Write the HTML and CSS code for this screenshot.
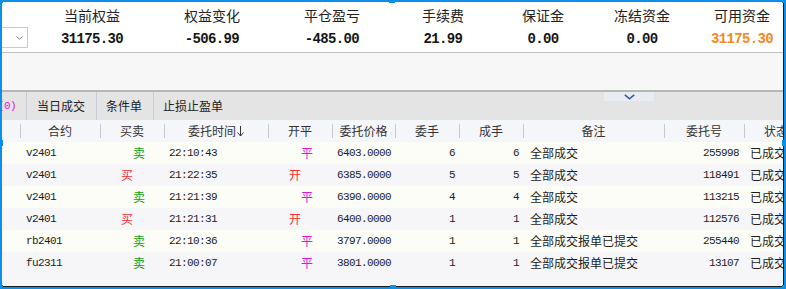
FILE: index.html
```html
<!DOCTYPE html>
<html lang="zh">
<head>
<meta charset="utf-8">
<link rel="stylesheet" href="styles.css">
</head>
<body>
<div class="frame">
  <div class="inner">
    <div class="stats">
      <div class="dd"><svg width="7" height="4" viewBox="0 0 7 4"><polyline points="0.5,0.5 3.5,3.2 6.5,0.5" fill="none" stroke="#7a7a7a" stroke-width="1"/></svg></div>
      <div class="stat s1"><div class="lbl">当前权益</div><div class="val">31175.30</div></div>
      <div class="stat s2"><div class="lbl">权益变化</div><div class="val">-506.99</div></div>
      <div class="stat s3"><div class="lbl">平仓盈亏</div><div class="val">-485.00</div></div>
      <div class="stat s4"><div class="lbl">手续费</div><div class="val">21.99</div></div>
      <div class="stat s5"><div class="lbl">保证金</div><div class="val">0.00</div></div>
      <div class="stat s6"><div class="lbl">冻结资金</div><div class="val">0.00</div></div>
      <div class="stat s7"><div class="lbl">可用资金</div><div class="val orange">31175.30</div></div>
    </div>
    <div class="blank"></div>
    <div class="tabs">
      <div class="tab t1">(0)</div>
      <div class="tab t2">当日成交</div>
      <div class="tab t3">条件单</div>
      <div class="tab t4">止损止盈单</div>
      <div class="toggle"><svg width="11" height="6" viewBox="0 0 11 6"><polyline points="0.8,0.8 5.5,4.8 10.2,0.8" fill="none" stroke="#3657a8" stroke-width="1.6"/></svg></div>
    </div>
    <div class="thead">
      <div></div>
      <div class="th">合约</div>
      <div class="th">买卖</div>
      <div class="th">委托时间<svg class="arrow" width="7" height="11" viewBox="0 0 7 11"><line x1="3.5" y1="0" x2="3.5" y2="10" stroke="#333" stroke-width="1"/><polyline points="0.5,6.5 3.5,10 6.5,6.5" fill="none" stroke="#333" stroke-width="1"/></svg></div>
      <div class="th">开平</div>
      <div class="th">委托价格</div>
      <div class="th">委手</div>
      <div class="th">成手</div>
      <div class="th">备注</div>
      <div class="th">委托号</div>
      <div class="th">状态</div>
    </div>
    <div class="tbody">
      <div class="tr">
        <div></div><div class="td m sym">v2401</div><div class="td bs"><span class="sell">卖</span></div><div class="td m time">22:10:43</div><div class="td oc"><span class="close">平</span></div><div class="td m r">6403.0000</div><div class="td m r">6</div><div class="td m r">6</div><div class="td note">全部成交</div><div class="td m id">255998</div><div class="td st">已成交</div>
      </div>
      <div class="tr">
        <div></div><div class="td m sym">v2401</div><div class="td bs"><span class="buy">买</span></div><div class="td m time">21:22:35</div><div class="td oc"><span class="open">开</span></div><div class="td m r">6385.0000</div><div class="td m r">5</div><div class="td m r">5</div><div class="td note">全部成交</div><div class="td m id">118491</div><div class="td st">已成交</div>
      </div>
      <div class="tr">
        <div></div><div class="td m sym">v2401</div><div class="td bs"><span class="sell">卖</span></div><div class="td m time">21:21:39</div><div class="td oc"><span class="close">平</span></div><div class="td m r">6390.0000</div><div class="td m r">4</div><div class="td m r">4</div><div class="td note">全部成交</div><div class="td m id">113215</div><div class="td st">已成交</div>
      </div>
      <div class="tr">
        <div></div><div class="td m sym">v2401</div><div class="td bs"><span class="buy">买</span></div><div class="td m time">21:21:31</div><div class="td oc"><span class="open">开</span></div><div class="td m r">6400.0000</div><div class="td m r">1</div><div class="td m r">1</div><div class="td note">全部成交</div><div class="td m id">112576</div><div class="td st">已成交</div>
      </div>
      <div class="tr">
        <div></div><div class="td m sym">rb2401</div><div class="td bs"><span class="sell">卖</span></div><div class="td m time">22:10:36</div><div class="td oc"><span class="close">平</span></div><div class="td m r">3797.0000</div><div class="td m r">1</div><div class="td m r">1</div><div class="td note">全部成交报单已提交</div><div class="td m id">255440</div><div class="td st">已成交</div>
      </div>
      <div class="tr">
        <div></div><div class="td m sym">fu2311</div><div class="td bs"><span class="sell">卖</span></div><div class="td m time">21:00:07</div><div class="td oc"><span class="close">平</span></div><div class="td m r">3801.0000</div><div class="td m r">1</div><div class="td m r">1</div><div class="td note">全部成交报单已提交</div><div class="td m id">13107</div><div class="td st">已成交</div>
      </div>
    </div>
  </div>
  <span class="h h-tl"></span>
  <span class="h h-tm"></span>
  <span class="h h-tr"></span>
  <span class="h h-ml"></span>
  <span class="h h-mr"></span>
  <span class="h h-bl"></span>
  <span class="h h-bm"></span>
  <span class="h h-br"></span>
</div>
</body>
</html>
```
FILE: styles.css
```css
html, body {
  margin: 0;
  padding: 0;
  overflow: hidden;
  background: #fff;
}
body {
  font-family: "Noto Sans CJK SC", "Noto Sans", sans-serif;
  color: #1c1c1c;
}
.frame {
  position: relative;
  width: 786px;
  height: 289px;
  box-sizing: border-box;
  border: 2px solid #0d8ee9;
}
.inner {
  height: 100%;
  box-sizing: border-box;
  border-right: 1px solid #1c1c1c;
  border-bottom: 1px solid #1c1c1c;
  overflow: hidden;
  background: #f6f6f9;
}

/* stats */
.stats {
  height: 50px;
  display: flex;
  background: #fff;
  border-bottom: 1px solid #c2c2c2;
}
.dd {
  flex: none;
  width: 21px;
  height: 19px;
  margin-top: 25px;
  padding-right: 4px;
  border: 1px solid #c9c9c9;
  border-left: none;
  display: flex;
  align-items: center;
  justify-content: flex-end;
  background: #fff;
}
.stat {
  flex: none;
  text-align: center;
  padding-top: 3px;
}
.s1 { width: 120px; margin-left: 4px; }
.s2 { width: 120px; }
.s3 { width: 120px; }
.s4 { width: 102px; }
.s5 { width: 98px; }
.s6 { width: 100px; }
.s7 { width: 100px; }
.lbl {
  font-size: 14px;
  line-height: 20px;
  color: #222;
}
.val {
  margin-top: 4px;
  font-family: "Liberation Mono", monospace;
  font-weight: bold;
  font-size: 14px;
  line-height: 20px;
  letter-spacing: -0.65px;
  color: #151515;
}
.val.orange { color: #f38a1f; }

.blank {
  height: 37px;
  background: #f7f7f7;
  border-bottom: 2px solid #b6b6b6;
}

/* tabs */
.tabs {
  position: relative;
  height: 28px;
  display: flex;
  background: #e4e4e5;
}
.tab {
  font-size: 12px;
  line-height: 28px;
  color: #222;
  white-space: nowrap;
  border-right: 1px solid #c9cdd7;
}
.t1 {
  margin-left: -4px;
  padding-right: 10px;
  font-family: "Liberation Mono", monospace;
  font-size: 11px;
  letter-spacing: -0.6px;
  color: #e014e0;
}
.t2 { padding: 0 11px 0 10px; }
.t3 { padding: 0 11px 0 9px; }
.t4 { padding: 0 0 0 9px; border-right: none; }
.toggle {
  position: absolute;
  left: 602px;
  top: 0;
  width: 50px;
  height: 9px;
  background: #e9ecf3;
  display: flex;
  align-items: center;
  justify-content: center;
}

/* table */
.thead, .tr {
  display: grid;
  grid-template-columns: 18px 80px 64px 104px 64px 63px 64px 64px 141px 80px 64px;
  height: 22px;
}
.thead {
  background: #f5f6f9;
}
.th {
  font-size: 12px;
  line-height: 22px;
  color: #333;
  text-align: center;
  white-space: nowrap;
  background: linear-gradient(#c5c9d3, #c5c9d3) left center / 1px 14px no-repeat;
  display: flex;
  align-items: center;
  justify-content: center;
}
.arrow { margin-left: 1px; }
.tr:nth-child(odd) { background: #fdfdf7; }
.tr:nth-child(even) { background: #f6f6f9; }
.td {
  font-size: 12px;
  line-height: 22px;
  white-space: nowrap;
  overflow: hidden;
  color: #1c1c1c;
}
.m {
  font-family: "Liberation Mono", monospace;
  font-size: 11px;
  letter-spacing: -0.6px;
}
.sym { padding-left: 6px; }
.bs, .oc { padding-left: 21px; }
.sell { margin-left: 12px; color: #0ea00e; }
.buy { color: #ff2e2e; }
.close { margin-left: 12px; color: #e014e0; }
.open { color: #ff2e2e; }
.time { padding-left: 5px; }
.r { text-align: right; padding-right: 4px; }
.note { padding-left: 7px; }
.id { text-align: right; padding-right: 5px; }
.st { padding-left: 6px; }

/* selection handles */
.h {
  position: absolute;
  width: 6px;
  height: 6px;
  background: #0d8ee9;
}
.h-tl { left: -5px; top: -5px; }
.h-tm { left: 387px; top: -5px; }
.h-tr { left: 780px; top: -5px; }
.h-ml { left: -5px; top: 138px; }
.h-mr { left: 780px; top: 138px; }
.h-bl { left: -5px; top: 283px; }
.h-bm { left: 388px; top: 283px; }
.h-br { left: 780px; top: 283px; }
```
